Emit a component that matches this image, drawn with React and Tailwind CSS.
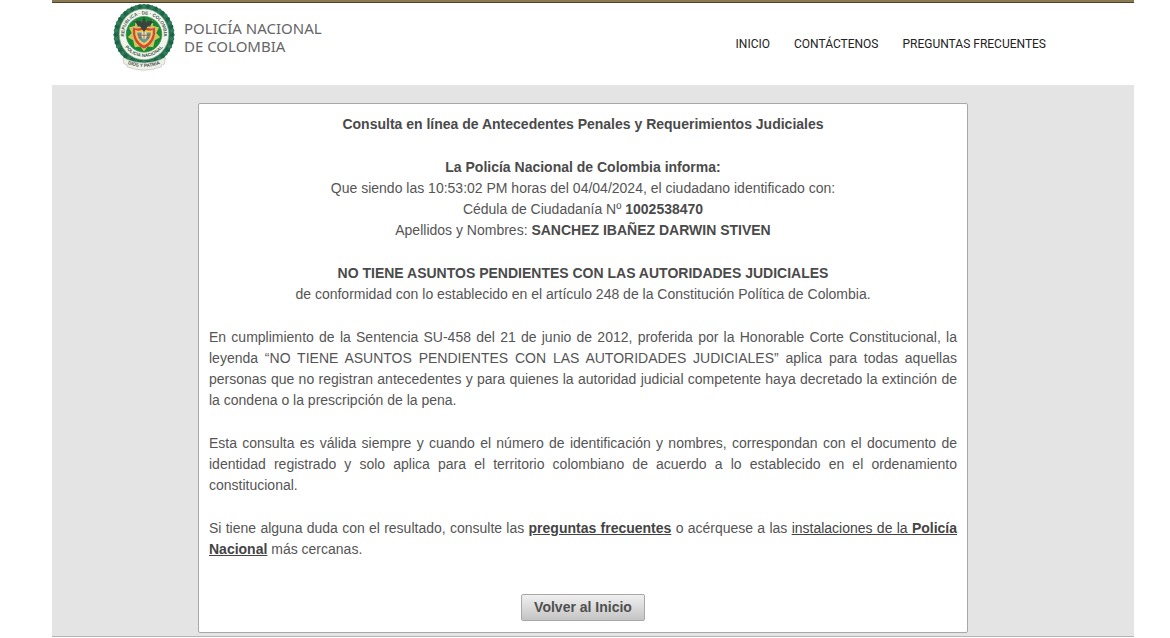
import React from 'react';

const leaves = Array.from({ length: 44 }, (_, i) => i);

function Emblem() {
  return (
    <svg viewBox="0 0 190 206" className="h-[68px] w-16 shrink-0" role="img" aria-label="Escudo de la Policía Nacional de Colombia">
      <defs>
        <path id="arc-top" d="M37 110 A60 60 0 1 1 153 110" />
        <path id="arc-bottom" d="M27 110 A70 70 0 0 0 163 110" />
        <path id="arc-ribbon" d="M40 182 Q95 206 150 182" />
      </defs>
      <ellipse cx="95" cy="96" rx="91" ry="92" fill="#23704e" />
      {leaves.map((i) => (
        <ellipse
          key={i}
          cx="95"
          cy="10"
          rx="5"
          ry="7"
          fill={i % 2 ? '#1d6446' : '#347d5b'}
          transform={`rotate(${(i * 360) / 44} 95 96)`}
        />
      ))}
      <ellipse cx="95" cy="95" rx="75" ry="77" fill="#f1f5ee" stroke="#8fae98" strokeWidth="2" />
      <text fontFamily="Liberation Sans, sans-serif" fontWeight="bold" fontSize="14" fill="#3f5a48">
        <textPath href="#arc-top" startOffset="50%" textAnchor="middle">REPUBLICA · DE · COLOMBIA</textPath>
      </text>
      <text fontFamily="Liberation Sans, sans-serif" fontWeight="bold" fontSize="14" fill="#3f5a48">
        <textPath href="#arc-bottom" startOffset="50%" textAnchor="middle">POLICIA NACIONAL</textPath>
      </text>
      <circle cx="95" cy="95" r="54" fill="#148a35" stroke="#4b8450" strokeWidth="2" />
      <path d="M95 48 L104 60 L122 53 L122 69 L141 74 L132 91 L144 104 L128 113 L123 134 L106 132 L95 147 L84 132 L67 134 L62 113 L46 104 L58 91 L49 74 L68 69 L68 53 L86 60 Z" fill="#d0c45c" />
      <path d="M62 74 Q79 82 95 72 Q111 82 128 74 Q134 119 95 138 Q56 119 62 74 Z" fill="#d4463b" />
      <path d="M68 82 Q82 88 95 79 Q108 88 122 82 Q124 115 95 129 Q66 115 68 82 Z" fill="#f0cd4e" />
      <path d="M74 89 H116 Q115 110 95 121 Q75 110 74 89 Z" fill="#5b9aa6" />
      <path d="M76 97 H114 M79 105 H111" stroke="#b94738" strokeWidth="3" />
      <path d="M64 57 Q80 49 88 58 L95 42 L102 58 Q112 49 126 58 Q116 59 114 72 Q105 66 101 80 L95 88 L89 80 Q83 66 76 72 Q74 60 64 57 Z" fill="#38443e" />
      <path d="M88 88 H103 V105 L95 112 L88 105 Z" fill="#e8dcaa" />
      <path d="M95 88 V112 M88 98 H103" stroke="#75513f" strokeWidth="2" />
      <path d="M31 165 L45 172 Q95 192 145 172 L160 165 L157 185 L147 188 L148 193 Q95 214 43 193 L44 187 L34 184 Z" fill="#eff1e9" stroke="#b8c0b4" strokeWidth="2" />
      <text fontFamily="Liberation Sans, sans-serif" fontWeight="bold" fontSize="14" fill="#414a42">
        <textPath href="#arc-ribbon" startOffset="50%" textAnchor="middle">DIOS Y PATRIA</textPath>
      </text>
    </svg>
  );
}

const navItems = ['INICIO', 'CONTÁCTENOS', 'PREGUNTAS FRECUENTES'];

export default function App() {
  return (
    <div className="bg-white pr-9 pl-[52px] font-['Liberation_Sans',Arial,sans-serif]">
      <header className="border-t-2 border-[#8c7a52]">
        <div className="flex h-[83px] items-start justify-between border-t border-[#4f4328] pr-[88px] pl-[60px]">
          <a href="#inicio" className="flex items-start gap-2">
            <Emblem />
            <span className="mt-4 font-['Noto_Sans',sans-serif] text-[15px] leading-[18px] text-[#666]">
              POLICÍA NACIONAL
              <br />
              DE COLOMBIA
            </span>
          </a>
          <nav className="mt-8 flex gap-6 font-['Roboto',sans-serif] text-xs leading-[18px] text-[#222]">
            {navItems.map((item) => (
              <a key={item} href="#menu">{item}</a>
            ))}
          </nav>
        </div>
      </header>

      <main className="border-b border-[#b5b5b5] bg-[#e4e4e4] pt-[18px] pr-10 pb-[3px] pl-5">
        <section className="mx-auto flex max-w-[770px] flex-col gap-[22px] rounded-xs border border-[#a8a8a8] bg-white px-2.5 pt-[10px] pb-[11px] text-sm leading-[21px] text-[#555]">
          <h1 className="text-center font-bold text-[#4a4a4a]">
            Consulta en línea de Antecedentes Penales y Requerimientos Judiciales
          </h1>
          <div className="text-center">
            <h2 className="font-bold text-[#4a4a4a]">La Policía Nacional de Colombia informa:</h2>
            <p>Que siendo las 10:53:02 PM horas del 04/04/2024, el ciudadano identificado con:</p>
            <p>Cédula de Ciudadanía Nº <b className="text-[#4a4a4a]">1002538470</b></p>
            <p>Apellidos y Nombres: <b className="text-[#4a4a4a]">SANCHEZ IBAÑEZ DARWIN STIVEN</b></p>
          </div>
          <div className="text-center">
            <h2 className="font-bold text-[#4a4a4a]">NO TIENE ASUNTOS PENDIENTES CON LAS AUTORIDADES JUDICIALES</h2>
            <p>de conformidad con lo establecido en el artículo 248 de la Constitución Política de Colombia.</p>
          </div>
          <p className="text-justify">
            En cumplimiento de la Sentencia SU-458 del 21 de junio de 2012, proferida por la Honorable Corte Constitucional, la leyenda “NO TIENE ASUNTOS PENDIENTES CON LAS AUTORIDADES JUDICIALES” aplica para todas aquellas personas que no registran antecedentes y para quienes la autoridad judicial competente haya decretado la extinción de la condena o la prescripción de la pena.
          </p>
          <p className="text-justify">
            Esta consulta es válida siempre y cuando el número de identificación y nombres, correspondan con el documento de identidad registrado y solo aplica para el territorio colombiano de acuerdo a lo establecido en el ordenamiento constitucional.
          </p>
          <p className="text-justify">
            Si tiene alguna duda con el resultado, consulte las{' '}
            <a href="#preguntas" className="font-bold text-[#444] underline">preguntas frecuentes</a> o acérquese a las{' '}
            <a href="#instalaciones" className="text-[#444] underline">instalaciones de la <b>Policía Nacional</b></a> más cercanas.
          </p>
          <div className="flex justify-center pt-3">
            <button
              type="button"
              className="h-[27px] rounded-xs border border-[#a8a8a8] bg-linear-to-b from-[#f0f0f0] to-[#c4c4c4] px-3 font-bold text-[#4f4f4f]"
            >
              Volver al Inicio
            </button>
          </div>
        </section>
      </main>
    </div>
  );
}
